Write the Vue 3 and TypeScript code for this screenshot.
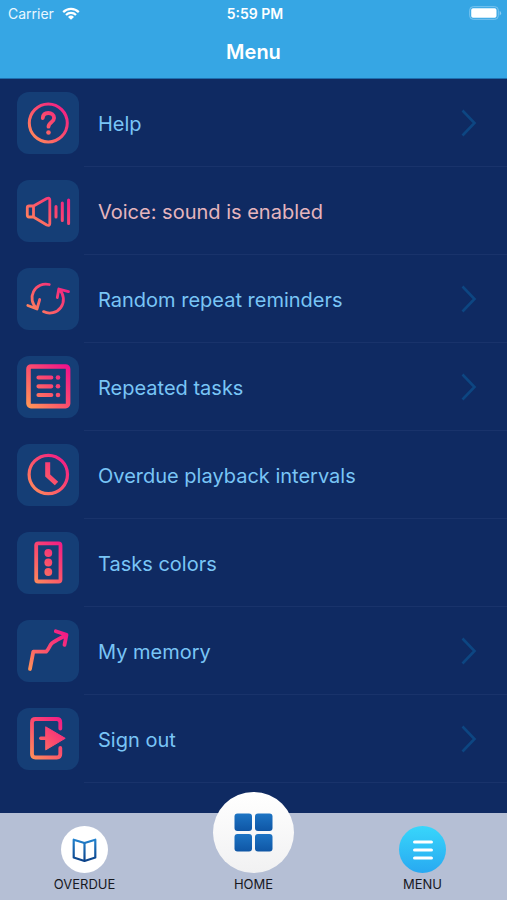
<script setup lang="ts">
type IconName = 'help' | 'voice' | 'random' | 'repeated' | 'clock' | 'colors' | 'memory' | 'signout'

interface MenuItem {
  icon: IconName
  label: string
  arrow: boolean
  accent?: boolean
}

const items: MenuItem[] = [
  { icon: 'help', label: 'Help', arrow: true },
  { icon: 'voice', label: 'Voice: sound is enabled', arrow: false, accent: true },
  { icon: 'random', label: 'Random repeat reminders', arrow: true },
  { icon: 'repeated', label: 'Repeated tasks', arrow: true },
  { icon: 'clock', label: 'Overdue playback intervals', arrow: false },
  { icon: 'colors', label: 'Tasks colors', arrow: false },
  { icon: 'memory', label: 'My memory', arrow: true },
  { icon: 'signout', label: 'Sign out', arrow: true },
]
</script>

<template>
  <div class="screen">
    <svg class="defs" width="0" height="0" aria-hidden="true">
      <defs>
        <linearGradient id="flame" gradientUnits="userSpaceOnUse" x1="10" y1="52" x2="52" y2="10">
          <stop offset="0" stop-color="#ff9a56" />
          <stop offset="0.5" stop-color="#fb4f6c" />
          <stop offset="1" stop-color="#f0108c" />
        </linearGradient>
        <linearGradient id="ocean" x1="0" y1="0" x2="0" y2="1">
          <stop offset="0" stop-color="#1d74c4" />
          <stop offset="1" stop-color="#0f56a5" />
        </linearGradient>
        <linearGradient id="book" gradientUnits="userSpaceOnUse" x1="0" y1="12" x2="0" y2="36">
          <stop offset="0" stop-color="#2486d2" />
          <stop offset="1" stop-color="#0a3f86" />
        </linearGradient>
      </defs>
    </svg>

    <header class="top">
      <div class="status">
        <div class="carrier">
          <span>Carrier</span>
          <svg width="18" height="13" viewBox="0 0 18 13" aria-hidden="true">
            <g fill="none" stroke="#fff" stroke-width="2.2">
              <path d="M1.2 5.1a11 11 0 0 1 15.6 0" />
              <path d="M4 8a7 7 0 0 1 10 0" />
            </g>
            <path d="M9 12.8 6 9.9a4.300 4.300 0 0 1 6 0z" fill="#fff" />
          </svg>
        </div>
        <time class="time">5:59 PM</time>
        <div class="battery">
          <svg width="33" height="14" viewBox="0 0 33 14" aria-hidden="true">
            <rect x="0.700" y="0.700" width="28.600" height="12.600" rx="3.500" fill="none" stroke="#7cc5ef" stroke-width="1" />
            <rect x="2.200" y="2.200" width="25.300" height="9.600" rx="1.800" fill="#fff" />
            <path d="M30.700 5v4.400a2.400 2.400 0 0 0 0-4.400z" fill="#8acbf1" />
          </svg>
        </div>
      </div>
      <h1 class="title">Menu</h1>
    </header>

    <main class="list">
      <button v-for="item in items" :key="item.label" type="button" class="row">
        <span class="tile">
          <svg class="glyph" viewBox="0 0 62 62" fill="none" stroke="url(#flame)" stroke-width="3" stroke-linecap="round" stroke-linejoin="round" aria-hidden="true">
            <template v-if="item.icon === 'help'">
              <circle cx="31.300" cy="31" r="19" />
              <path d="M25.800 26c.2-3.300 2.500-5 5.500-5s5.800 1.700 5.800 4.900c0 4.300-5.600 4.200-5.600 8.800" stroke-width="3.800" />
              <circle cx="31.500" cy="40.500" r="2.300" fill="url(#flame)" stroke="none" />
            </template>
            <template v-else-if="item.icon === 'voice'">
              <path d="M16.500 26h-4.500q-1.700 0-1.700 1.700v7.600q0 1.700 1.700 1.700h4.500zM16.500 26 29.800 18.500q3-1.200 3 1.500v23.500q0 2.700-3 1.500L16.500 37" stroke-width="2.800" />
              <path d="M39 26.500v10.500M45.300 23v17.500M51.600 20v23.500" />
            </template>
            <template v-else-if="item.icon === 'random'">
              <path d="M32.300 16.500A13.900 13.900 0 0 0 19.800 40.500M10.800 37.500 20 41l2.700-9.500" stroke-width="2.800" />
              <path d="M26.500 43.600A13.700 13.700 0 0 0 42.200 21.500M40.300 29.500 41.800 21l9.700 2.600" stroke-width="2.800" />
            </template>
            <template v-else-if="item.icon === 'repeated'">
              <rect x="11.500" y="10.500" width="39.600" height="39.600" rx="2.500" stroke-width="4.600" />
              <path d="M21.500 21.500h12.800M21.500 30.300h12.800M21.500 39h12.800" stroke-width="4.200" />
              <g fill="url(#flame)" stroke="none">
                <circle cx="41" cy="21.500" r="2.300" />
                <circle cx="41" cy="30.300" r="2.300" />
                <circle cx="41" cy="39" r="2.300" />
              </g>
            </template>
            <template v-else-if="item.icon === 'clock'">
              <circle cx="31.300" cy="30.500" r="19.200" stroke-width="3.200" />
              <path d="M30.700 18.300v13.200l8.800 8" stroke-width="5" stroke-linecap="butt" stroke-linejoin="miter" />
            </template>
            <template v-else-if="item.icon === 'colors'">
              <rect x="19.200" y="11.300" width="24.300" height="38.200" rx="2" stroke-width="3.800" />
              <g fill="url(#flame)" stroke="none">
                <circle cx="31.300" cy="21" r="3.900" />
                <circle cx="31.300" cy="30.500" r="3.900" />
                <circle cx="31.300" cy="40" r="3.900" />
              </g>
            </template>
            <template v-else-if="item.icon === 'memory'">
              <path d="M13 49l3.300-17.300h12.700c3.500-3 3.200-6 6-8.500s8-4.700 13.500-7.700M38.800 11.300l10.700 3.500-2 10" stroke-width="3.800" />
            </template>
            <template v-else>
              <path d="M43.300 20.500v-6q0-3.500-3.500-3.500h-21.300q-3.500 0-3.500 3.500v31.500q0 3.500 3.500 3.500h21.300q3.500 0 3.500-3.500v-6" stroke-width="3.800" />
              <path d="M23.800 30.300h7" stroke-width="3.400" />
              <path d="M29 19 48.200 30.300 29 41.700z" fill="url(#flame)" stroke-width="1" />
            </template>
          </svg>
        </span>
        <span class="cell">
          <span class="label" :class="{ accent: item.accent }">{{ item.label }}</span>
          <svg v-if="item.arrow" class="chevron" width="16" height="28" viewBox="0 0 16 28" aria-hidden="true">
            <path d="M1.500 1.500 13.500 14 1.500 26.500" fill="none" stroke="#0d4682" stroke-width="2.600" />
          </svg>
        </span>
      </button>
    </main>

    <nav class="tabs">
      <a class="tab" href="#overdue">
        <span class="disc white">
          <svg width="47" height="47" viewBox="0 0 47 47" fill="none" stroke="url(#book)" stroke-width="2.200" stroke-linejoin="round" aria-hidden="true">
            <path d="M23.500 17 12.700 13.700v17.800l10.800 3.500 10.800-3.500v-17.800z" />
            <path d="M22.400 17h2.200v17.500h-2.200z" fill="url(#book)" stroke="none" />
          </svg>
        </span>
        <span class="caption">OVERDUE</span>
      </a>
      <a class="tab" href="#home">
        <span class="disc home">
          <svg width="39" height="39" viewBox="0 0 39 39" fill="url(#ocean)" aria-hidden="true">
            <rect x="0.500" y="0.500" width="17.500" height="17.500" rx="3" />
            <rect x="21" y="0.500" width="17.500" height="17.500" rx="3" />
            <rect x="0.500" y="21" width="17.500" height="17.500" rx="3" />
            <rect x="21" y="21" width="17.500" height="17.500" rx="3" />
          </svg>
        </span>
        <span class="caption">HOME</span>
      </a>
      <a class="tab" href="#menu" aria-current="page">
        <span class="disc sky">
          <svg width="20" height="20" viewBox="0 0 20 20" stroke="#fff" stroke-width="3.200" stroke-linecap="round" aria-hidden="true">
            <path d="M1.600 2h16.800M1.600 10h16.800M1.600 18h16.800" />
          </svg>
        </span>
        <span class="caption">MENU</span>
      </a>
    </nav>
  </div>
</template>

<style>
body {
  margin: 0;
  background: #0f2a62;
}
</style>

<style scoped>
.screen {
  display: flex;
  flex-direction: column;
  min-height: 100vh;
  background: #0f2a62;
  color: #fff;
  font-family: Inter, "Liberation Sans", sans-serif;
}

.defs {
  position: absolute;
}

.top {
  background: #36a6e4;
  border-bottom: 1px solid #1e6fb0;
  box-sizing: border-box;
  height: 79px;
}

.status {
  display: grid;
  grid-template-columns: 1fr auto 1fr;
  align-items: center;
  height: 26px;
  padding: 0 5px 0 8px;
}

.carrier {
  display: flex;
  align-items: center;
  gap: 8px;
  font-size: 14px;
  color: #e9f7ff;
}

.time {
  font-size: 14px;
  font-weight: 600;
}

.battery {
  display: flex;
  justify-content: flex-end;
}

.title {
  margin: 0;
  font-size: 20px;
  line-height: 52px;
  font-weight: 600;
  text-align: center;
}

.list {
  flex: 1;
}

.row {
  display: flex;
  align-items: center;
  gap: 5px;
  width: 100%;
  height: 88px;
  padding: 0 0 0 17px;
  border: 0;
  background: none;
  font: inherit;
  text-align: left;
  cursor: pointer;
}

.tile {
  flex: none;
  width: 62px;
  height: 62px;
  border-radius: 12px;
  background: #153e76;
}

.glyph {
  display: block;
  width: 62px;
  height: 62px;
}

.cell {
  flex: 1;
  display: flex;
  align-items: center;
  justify-content: space-between;
  box-sizing: border-box;
  height: 88px;
  padding: 0 30px 0 14px;
  border-bottom: 1px solid #19336b;
}

.label {
  padding-top: 2px;
  font-size: 20px;
  color: #79c5f6;
}

.accent {
  color: #e5b5bd;
}

.chevron {
  display: block;
}

.tabs {
  display: grid;
  grid-template-columns: repeat(3, 1fr);
  height: 87px;
  background: #b5bfd5;
}

.tab {
  display: flex;
  flex-direction: column;
  align-items: center;
  justify-content: flex-end;
  gap: 3px;
  box-sizing: border-box;
  height: 87px;
  padding-bottom: 7px;
  color: #17181f;
  text-decoration: none;
}

.disc {
  display: flex;
  flex: none;
  align-items: center;
  justify-content: center;
  width: 47px;
  height: 47px;
  border-radius: 50%;
}

.white {
  background: #fff;
}

.home {
  width: 81px;
  height: 81px;
  background: linear-gradient(#fff, #f1f1f2);
}

.sky {
  background: linear-gradient(#38d6fb, #28a9f1);
}

.caption {
  font-size: 13px;
  line-height: 17px;
}
</style>
